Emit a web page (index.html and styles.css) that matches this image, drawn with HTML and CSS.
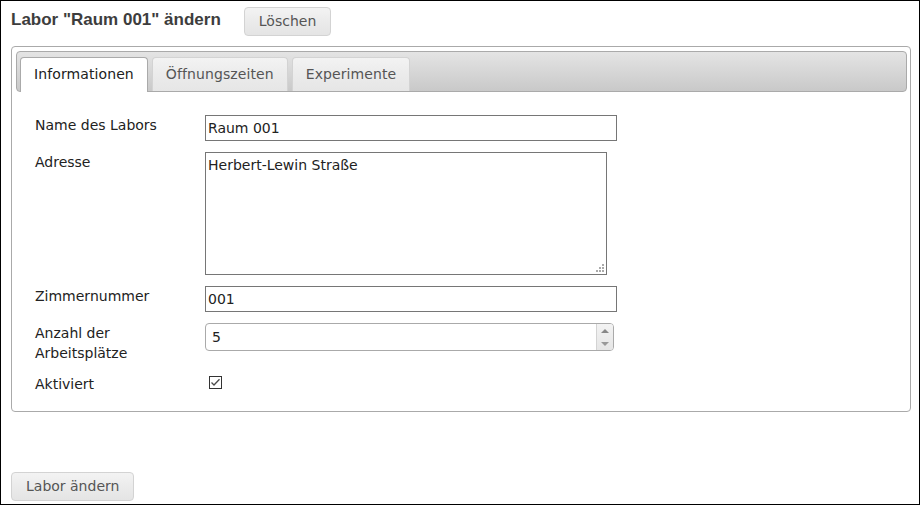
FILE: index.html
```html
<!DOCTYPE html>
<html lang="de">
<head>
<meta charset="utf-8">
<title>Labor ändern</title>
<link rel="stylesheet" href="styles.css">
</head>
<body>
<div class="frame">
  <div class="header">
    <h1 class="title">Labor "Raum 001" ändern</h1>
    <button class="btn" type="button">Löschen</button>
  </div>
  <div class="tabs">
    <ul class="tab-nav">
      <li class="tab active">Informationen</li>
      <li class="tab">Öffnungszeiten</li>
      <li class="tab">Experimente</li>
    </ul>
    <div class="panel">
      <form class="form">
        <label class="lbl" for="name">Name des Labors</label>
        <div><input class="field" id="name" type="text" value="Raum 001"></div>
        <label class="lbl" for="addr">Adresse</label>
        <div><textarea class="area" id="addr">Herbert-Lewin Straße</textarea></div>
        <label class="lbl" for="room">Zimmernummer</label>
        <div><input class="field" id="room" type="text" value="001"></div>
        <label class="lbl" for="seats">Anzahl der<br>Arbeitsplätze</label>
        <div>
          <span class="spinner">
            <input class="spin-input" id="seats" type="text" value="5">
            <span class="spin-btns">
              <span class="spin-btn"><span class="tri-up"></span></span>
              <span class="spin-btn"><span class="tri-down"></span></span>
            </span>
          </span>
        </div>
        <span class="lbl">Aktiviert</span>
        <div>
          <span class="checkbox" role="checkbox" aria-checked="true">
            <svg width="13" height="13" viewBox="0 0 13 13"><rect x="0.5" y="0.5" width="12" height="12" fill="#fff" stroke="#333"/><polyline points="2.5,6.5 5,9 10.5,3.2" fill="none" stroke="#4a4a4a" stroke-width="1.3"/></svg>
          </span>
        </div>
      </form>
    </div>
  </div>
  <button class="btn submit" type="button">Labor ändern</button>
</div>
</body>
</html>
```
FILE: styles.css
```css
html, body {
  margin: 0;
  padding: 0;
  background: #fff;
}

.frame {
  box-sizing: border-box;
  width: 920px;
  height: 505px;
  border: 1px solid #000;
  padding: 6px 8px 0 10px;
  font-family: "DejaVu Sans", Verdana, sans-serif;
  font-size: 14px;
  color: #222;
}

.header {
  display: flex;
  align-items: flex-start;
  height: 29px;
}

.title {
  margin: 2px 23px 0 0;
  font: bold 17px/21px "Liberation Sans", Arial, sans-serif;
  color: #3d3d3d;
}

.btn {
  box-sizing: border-box;
  height: 29px;
  margin: 0;
  padding: 0 14px;
  border: 1px solid #d3d3d3;
  border-radius: 4px;
  background: linear-gradient(#f3f3f3, #ebebeb 50%, #e4e4e4);
  font: 14px/17px "DejaVu Sans", Verdana, sans-serif;
  color: #555;
}

.tabs {
  margin-top: 10px;
  border: 1px solid #aaa;
  border-radius: 4px;
  padding: 4px 3px 0 4px;
}

.tab-nav {
  display: flex;
  align-items: flex-start;
  gap: 4px;
  list-style: none;
  margin: 0;
  padding: 5px 3px 0;
  border: 1px solid #aaa;
  border-radius: 4px;
  background: linear-gradient(#e4e4e4, #c9c9c9);
}

.tab {
  border: 1px solid #d3d3d3;
  border-bottom: 0;
  border-radius: 4px 4px 0 0;
  padding: 8px 13px;
  line-height: 17px;
  letter-spacing: 0.1px;
  background: linear-gradient(#f3f3f3, #ebebeb 50%, #e6e6e6);
  color: #555;
}

.tab.active {
  position: relative;
  background: #fff;
  border-color: #aaa;
  color: #212121;
  padding-bottom: 9px;
  margin-bottom: -1px;
}

.panel {
  padding: 23px 19px 17px;
}

.form {
  display: grid;
  grid-template-columns: 170px 1fr;
  row-gap: 11px;
  align-items: start;
}

.lbl {
  line-height: 20px;
}

.field {
  box-sizing: border-box;
  display: block;
  width: 412px;
  height: 26px;
  margin: 0;
  padding: 0 2px;
  border: 1px solid #767676;
  font: 14px "DejaVu Sans", Verdana, sans-serif;
  color: #222;
  background: #fff;
}

.area {
  box-sizing: border-box;
  display: block;
  width: 402px;
  height: 123px;
  margin: 0;
  padding: 4px 2px;
  border: 1px solid #767676;
  font: 14px "DejaVu Sans", Verdana, sans-serif;
  color: #222;
  resize: none;
  background-color: #fff;
  background-image:
    linear-gradient(#aaa, #aaa),
    linear-gradient(#aaa, #aaa),
    linear-gradient(#aaa, #aaa),
    linear-gradient(#aaa, #aaa),
    linear-gradient(#aaa, #aaa),
    linear-gradient(#aaa, #aaa);
  background-size: 2px 2px;
  background-repeat: no-repeat;
  background-position:
    right 2px bottom 2px,
    right 5px bottom 2px,
    right 8px bottom 2px,
    right 2px bottom 5px,
    right 5px bottom 5px,
    right 2px bottom 8px;
}

.spinner {
  box-sizing: border-box;
  display: flex;
  width: 409px;
  height: 28px;
  border: 1px solid #aaa;
  border-radius: 4px;
  overflow: hidden;
  background: #fff;
}

.spin-input {
  flex: 1;
  min-width: 0;
  margin: 0;
  padding: 0 0 0 6px;
  border: 0;
  outline: none;
  font: 14px "DejaVu Sans", Verdana, sans-serif;
  color: #222;
  background: transparent;
}

.spin-btns {
  display: flex;
  flex-direction: column;
  width: 16px;
  border-left: 1px solid #d3d3d3;
  background: linear-gradient(#f3f3f3, #e6e6e6);
}

.spin-btn {
  flex: 1;
  display: flex;
  align-items: center;
  justify-content: center;
}

.tri-up {
  width: 0;
  height: 0;
  border-left: 4px solid transparent;
  border-right: 4px solid transparent;
  border-bottom: 4px solid #888;
}

.tri-down {
  width: 0;
  height: 0;
  border-left: 4px solid transparent;
  border-right: 4px solid transparent;
  border-top: 4px solid #999;
}

.checkbox {
  display: block;
  width: 13px;
  height: 13px;
  margin: 2px 0 0 4px;
  line-height: 0;
}

.submit {
  margin-top: 60px;
}
```
